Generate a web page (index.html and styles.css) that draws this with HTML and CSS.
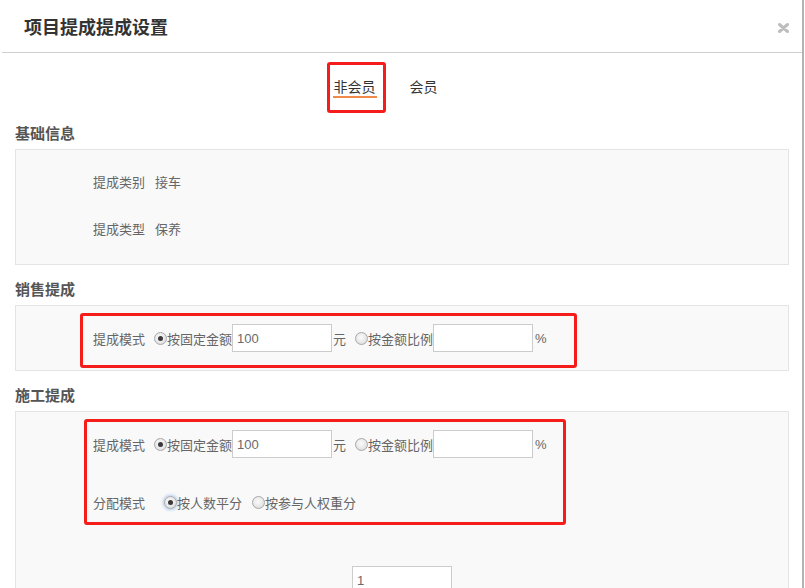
FILE: index.html
```html
<!DOCTYPE html>
<html lang="zh-CN">
<head>
<meta charset="utf-8">
<title>项目提成提成设置</title>
<link rel="stylesheet" href="styles.css">
</head>
<body>
<div class="modal">
  <div class="header">
    <h1 class="title">项目提成提成设置</h1>
    <span class="close" aria-label="关闭">
      <svg width="11" height="10" viewBox="0 0 11 10"><path d="M1.5 1.5 L9.5 8.5 M9.5 1.5 L1.5 8.5" stroke="#bdbdbd" stroke-width="3" stroke-linecap="round"/></svg>
    </span>
  </div>

  <div class="tabs">
    <div class="mark mark-tab"><span class="tab active">非会员</span></div>
    <span class="tab">会员</span>
  </div>

  <h2 class="sec-title">基础信息</h2>
  <div class="box box-info">
    <div class="info-row"><span class="label">提成类别</span><span class="value">接车</span></div>
    <div class="info-row"><span class="label">提成类型</span><span class="value">保养</span></div>
  </div>

  <h2 class="sec-title">销售提成</h2>
  <div class="box box-sale">
    <div class="mark mark-sale">
      <div class="row">
        <span class="label">提成模式</span>
        <span class="radio checked"></span><span class="opt">按固定金额</span>
        <input class="field" type="text" value="100">
        <span class="unit">元</span>
        <span class="radio gap"></span><span class="opt">按金额比例</span>
        <input class="field" type="text" value="">
        <span class="unit pct">%</span>
      </div>
    </div>
  </div>

  <h2 class="sec-title">施工提成</h2>
  <div class="box box-work">
    <div class="mark mark-work">
      <div class="row">
        <span class="label">提成模式</span>
        <span class="radio checked"></span><span class="opt">按固定金额</span>
        <input class="field" type="text" value="100">
        <span class="unit">元</span>
        <span class="radio gap"></span><span class="opt">按金额比例</span>
        <input class="field" type="text" value="">
        <span class="unit pct">%</span>
      </div>
      <div class="row row-alloc">
        <span class="label label-wide">分配模式</span>
        <span class="radio checked focus"></span><span class="opt">按人数平分</span>
        <span class="radio gap2"></span><span class="opt">按参与人权重分</span>
      </div>
    </div>
    <div class="weight-row">
      <input class="field" type="text" value="1">
    </div>
  </div>
</div>
</body>
</html>
```

FILE: styles.css
```css
html, body {
  margin: 0;
  padding: 0;
  background: #fff;
}

body {
  font-family: "Liberation Sans", "Noto Sans CJK SC", sans-serif;
  color: #666;
}

.modal {
  width: 802px;
  height: 588px;
  border-right: 2px solid #b3b3b3;
  background: #fff;
  overflow: hidden;
}

.header {
  height: 53px;
  margin-left: 2px;
  border-bottom: 1px solid #cfcfcf;
  display: flex;
  align-items: center;
  justify-content: space-between;
  padding: 3px 13px 0 22px;
  box-sizing: border-box;
}

.title {
  margin: 0;
  font-size: 18px;
  font-weight: bold;
  color: #333;
  line-height: 24px;
}

.close {
  display: flex;
  width: 11px;
  height: 10px;
}

.tabs {
  height: 56px;
  display: flex;
  justify-content: center;
  align-items: flex-start;
  gap: 23px;
  padding: 9px 37px 0 0;
  box-sizing: border-box;
}

.mark {
  border: 3px solid #f51d1a;
  border-radius: 3px;
  box-sizing: border-box;
}

.mark-tab {
  padding: 13px 6px 12px 3px;
}

.tab {
  display: block;
  font-size: 14px;
  line-height: 18px;
  color: #333;
  padding: 0 1px;
}

.tab.active {
  border-bottom: 2px solid #f28a4c;
}

.tabs > .tab {
  margin-top: 16px;
}

.sec-title {
  margin: 15px 0 5px 15px;
  font-size: 15px;
  line-height: 20px;
  font-weight: bold;
  color: #555;
}

.box {
  margin: 0 13px 0 15px;
  background: #f9f9f9;
  border: 1px solid #e4e4e4;
}

.box-info {
  padding: 23px 0 24px 77px;
  display: flex;
  flex-direction: column;
  gap: 27px;
}

.info-row {
  font-size: 13px;
  line-height: 20px;
  color: #666;
  display: flex;
}

.info-row .label {
  margin-right: 10px;
}

.box-sale {
  padding: 7px 0 2px 64px;
}

.mark-sale {
  width: 497px;
  padding: 8px 0 13px 10px;
}

.row {
  display: flex;
  align-items: center;
  font-size: 13px;
  color: #666;
  height: 28px;
}

.label {
  width: 52px;
  margin-right: 9px;
  white-space: nowrap;
}

.label-wide {
  margin-right: 19px;
}

.opt {
  white-space: nowrap;
}

.radio {
  width: 13px;
  height: 13px;
  border-radius: 50%;
  border: 1px solid #a8a8a8;
  background: radial-gradient(circle at 45% 40%, #fbfbfb 0%, #e6e6e6 60%, #cfcfcf 100%);
  box-sizing: border-box;
  display: inline-flex;
  align-items: center;
  justify-content: center;
  flex: none;
}

.radio.checked::after {
  content: "";
  width: 5px;
  height: 5px;
  border-radius: 50%;
  background: #3a3a3a;
}

.radio.focus {
  box-shadow: 0 0 3px 1px rgba(130, 175, 230, 0.65);
}

.radio.gap {
  margin-left: 9px;
}

.radio.gap2 {
  margin-left: 10px;
}

.field {
  width: 100px;
  height: 28px;
  box-sizing: border-box;
  border: 1px solid #cccccc;
  background: #fff;
  padding: 0 4px;
  margin: 0;
  font-family: "Liberation Sans", "Noto Sans CJK SC", sans-serif;
  font-size: 13px;
  color: #6a6a6a;
  outline: none;
}

.unit {
  margin-left: 1px;
}

.unit.pct {
  margin-left: 2px;
}

.box-work {
  padding: 7px 0 0 68px;
  height: 200px;
}

.mark-work {
  width: 482px;
  padding: 8px 0 10px 6px;
}

.row-alloc {
  margin-top: 34px;
  height: 20px;
}

.weight-row {
  margin: 41px 0 0 -68px;
  display: flex;
  justify-content: center;
}
```
